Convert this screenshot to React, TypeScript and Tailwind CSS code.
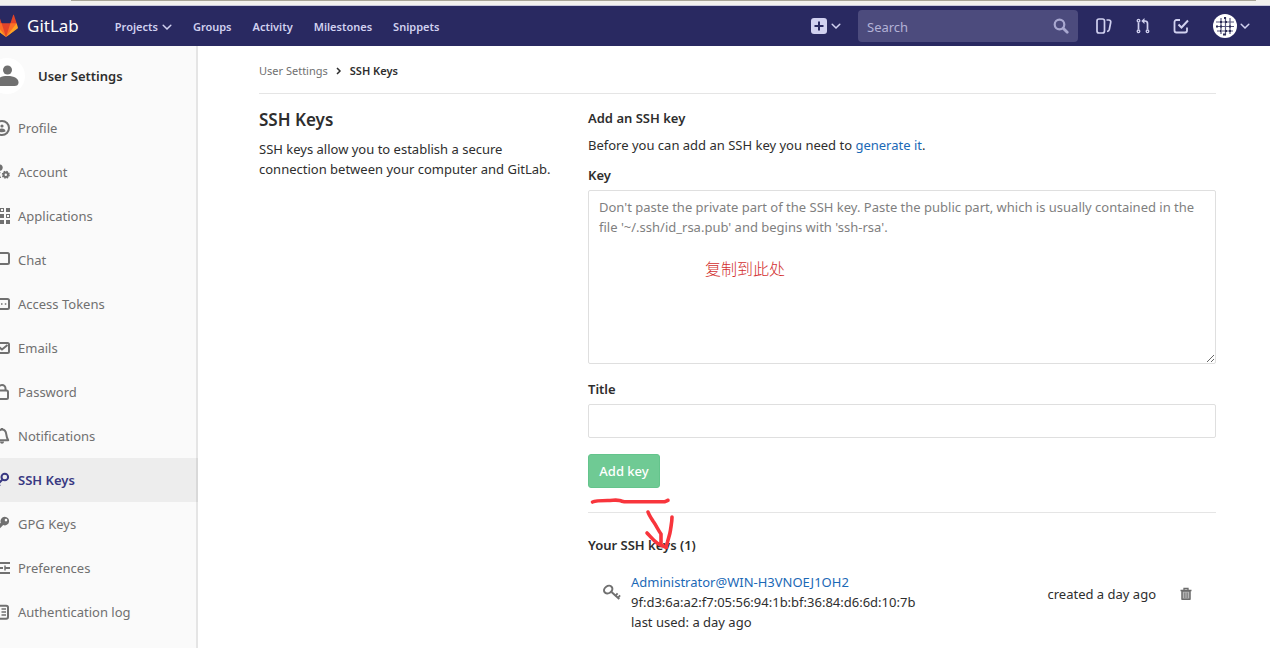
import type { ReactNode } from "react";

function Icon({ children, className = "size-4" }: { children: ReactNode; className?: string }) {
    return (
        <svg className={`${className} shrink-0`} viewBox="0 0 16 16" fill="none" stroke="currentColor" strokeWidth="2" aria-hidden="true">
            {children}
        </svg>
    );
}

function Chevron() {
    return (
        <svg className="w-2.5 h-2.5 shrink-0" viewBox="0 0 10 10" fill="none" stroke="currentColor" strokeWidth="1.5" strokeLinecap="round" aria-hidden="true">
            <path d="M1.2 3.2 5 7l3.8-3.8" />
        </svg>
    );
}

const menu = [
    {
        label: "Profile",
        icon: <><circle cx="8" cy="8" r="7" /><circle cx="8" cy="6" r="1.6" fill="currentColor" stroke="none" /><path d="M4.5 11.5c0-2 1.5-3 3.5-3s3.5 1 3.5 3c-2 1-5 1-7 0z" fill="currentColor" stroke="none" /></>,
    },
    {
        label: "Account",
        icon: <><circle cx="5.5" cy="3.6" r="3.2" fill="currentColor" stroke="none" /><path d="M0 13c0-3 2-5 5-5h1.600c-.9 2-.9 4 .6 6H1z" fill="currentColor" stroke="none" /><circle cx="11.8" cy="10.8" r="2.2" /><circle cx="11.8" cy="10.8" r="3.3" strokeWidth="1.5" strokeDasharray="1.5 1.1" /></>,
    },
    {
        label: "Applications",
        icon: <g fill="currentColor" stroke="none"><path d="M0 0h4v4H0zM12 0h4v4h-4zM6 6h4v4H6zM0 12h4v4H0zM6 12h4v4H6zM12 12h4v4h-4z" /><path fillRule="evenodd" d="M6 0h4v4H6zm1 1v2h2V1zM0 6h4v4H0zm1 1v2h2V7zM12 6h4v4h-4zm1 1v2h2V7z" /></g>,
    },
    {
        label: "Chat",
        icon: <path d="M2.5 1h11A1.5 1.5 0 0 1 15 2.5v8a1.5 1.5 0 0 1-1.5 1.5H5l-4 3v-12.500A1.5 1.5 0 0 1 2.5 1z" />,
    },
    {
        label: "Access Tokens",
        icon: <><rect x="1" y="3" width="14" height="10" rx="1.5" /><path d="M3.5 8H5M7 8h1.500M10.800 8h1.500" strokeWidth="1.5" /></>,
    },
    {
        label: "Emails",
        icon: <><rect x="1" y="3" width="14" height="10" rx="1.5" /><path d="m2.5 5 5.500 4.500L13.500 5" /></>,
    },
    {
        label: "Password",
        icon: <><rect x="2" y="6.5" width="12" height="8.5" rx="1.5" /><path d="M4.5 6V4.500a3.500 3.500 0 0 1 7 0V6" /></>,
    },
    {
        label: "Notifications",
        icon: <><path d="M8 1.500c-3 0-4 2.200-4.300 4.800C3.500 8.500 3 10 1.800 12.200h12.400C13 10 12.500 8.500 12.300 6.300 12 3.700 11 1.500 8 1.500z" strokeLinejoin="round" /><path d="M6 13.500h4c0 3-4 3-4 0zM7 0h2v2H7z" fill="currentColor" stroke="none" /></>,
    },
    {
        label: "SSH Keys",
        active: true,
        icon: <><circle cx="10.8" cy="5" r="3.3" /><path d="m8.500 7.500-7 7M4 12l2 2" /></>,
    },
    {
        label: "GPG Keys",
        icon: <path fill="currentColor" stroke="none" fillRule="evenodd" d="M10.800.8a4.300 4.300 0 1 1-1.600 8.300L3 15.200H1v-2.500l5.800-6A4.300 4.300 0 0 1 10.800.8zm1.200 2a1.300 1.300 0 1 0 0 2.600 1.300 1.300 0 0 0 0-2.600z" />,
    },
    {
        label: "Preferences",
        icon: <><path d="M0 3h16M0 13h16M0 8h9M11 8h5" /><path d="M11 5.500v5M5 1v4" strokeWidth="1.5" /></>,
    },
    {
        label: "Authentication log",
        icon: <><rect x="2" y="1.8" width="12" height="13" rx="1.8" /><path d="M4.500 5h1M4.500 8h1M4.500 11h1M7.500 5H12M7.500 8H12M7.500 11H12" strokeWidth="1.6" /></>,
    },
];

function Logo() {
    return (
        <svg className="size-6 shrink-0" viewBox="0 0 36 36" aria-hidden="true">
            <path fill="#e24329" d="M2 14l9.380 9v-9l-4-12.280c-.205-.632-1.176-.632-1.380 0z" />
            <path fill="#e24329" d="M34 14l-9.380 9v-9l4-12.280c.205-.632 1.176-.632 1.380 0z" />
            <path fill="#e24329" d="M18 34.380 3 14h30z" />
            <path fill="#fc6d26" d="M18 34.380 11.380 14H2l4 11z" />
            <path fill="#fc6d26" d="M18 34.380 24.620 14H34l-4 11z" />
            <path fill="#fca326" d="M2 14L.1 20.160c-.18.565 0 1.200.5 1.560l17.420 12.660z" />
            <path fill="#fca326" d="M34 14l1.900 6.160c.18.565 0 1.200-.5 1.560L18 34.380z" />
        </svg>
    );
}

function Header() {
    return (
        <header className="flex h-10 items-center bg-[#292961] pl-4 pr-5 text-[#d1d1f0]">
            <a href="#" className="flex items-center gap-[9px] text-[17px] text-white">
                <Logo />
                GitLab
            </a>
            <nav className="ml-9 flex items-center gap-[21px] pt-0.5 text-[11px] font-semibold">
                <button type="button" className="flex items-center gap-1">Projects <Chevron /></button>
                <a href="#">Groups</a>
                <a href="#">Activity</a>
                <a href="#">Milestones</a>
                <a href="#">Snippets</a>
            </nav>
            <div className="ml-auto flex items-center">
                <button type="button" aria-label="New" className="mr-[17px] flex items-center gap-1">
                    <svg className="size-4" viewBox="0 0 16 16" aria-hidden="true">
                        <rect width="16" height="16" rx="3" fill="currentColor" />
                        <path d="M8 3.500v9M3.500 8h9" stroke="#292961" strokeWidth="2" />
                    </svg>
                    <Chevron />
                </button>
                <form className="flex h-8 w-[220px] items-center rounded-sm bg-[#4c4b7d] px-[9px]">
                    <input type="search" aria-label="Search" placeholder="Search" className="min-w-0 flex-1 bg-transparent pt-0.5 text-[13px] outline-none placeholder:text-[#b3b2d6]" />
                    <svg className="size-4 text-[#a9a8d0]" viewBox="0 0 16 16" fill="none" stroke="currentColor" aria-hidden="true">
                        <circle cx="6.500" cy="6.500" r="4.800" strokeWidth="2.200" />
                        <path d="m10.200 10.200 4 4" strokeWidth="2.800" strokeLinecap="round" />
                    </svg>
                </form>
                <a href="#" aria-label="Issues" className="ml-[18px]">
                    <Icon>
                        <rect x="1" y="1" width="7.500" height="14" rx="2" strokeWidth="1.700" />
                        <path d="M10.500 2h2.200c1.600 0 2.300 1 2 2.500l-1.400 7c-.3 1.200-1 1.800-2.300 2" strokeWidth="1.700" />
                    </Icon>
                </a>
                <a href="#" aria-label="Merge requests" className="ml-[23px]">
                    <Icon>
                        <g strokeWidth="1.300">
                            <circle cx="3.500" cy="2.700" r="1.300" />
                            <circle cx="3.500" cy="13.300" r="1.300" />
                            <circle cx="12.500" cy="13.300" r="1.300" />
                            <path d="M3.500 4.500v7M12.500 11.500V5.500c0-1.500-1-2.500-2.500-2.500H8" strokeWidth="1.700" />
                        </g>
                        <path d="M9.500 0v6L6.300 3z" fill="currentColor" stroke="none" />
                    </Icon>
                </a>
                <a href="#" aria-label="Todos" className="ml-[22px]">
                    <Icon>
                        <path d="M7 2H3.500A2 2 0 0 0 1.500 4v8.500a2 2 0 0 0 2 2H12a2 2 0 0 0 2-2V9.500" strokeWidth="1.800" />
                        <path d="m5.500 6.500 3 3 6.500-7" strokeWidth="2" />
                    </Icon>
                </a>
                <button type="button" aria-label="User menu" className="ml-6 flex items-center gap-[3px]">
                    <svg className="size-6" viewBox="0 0 24 24" aria-hidden="true">
                        <circle cx="12" cy="12" r="12" fill="#fff" />
                        <path d="M8 4v16M12.500 3v18M17 4v16M3 8h18M3 12.500h18M4 17h16" stroke="#55557c" strokeWidth="1.200" />
                        <path d="M7 8h2M12 8h2M16 12.500h2M7 12.500h2M12 17h2M16 17h2M7 17h1M11 4h2M10 20.500h3M3 12.500h2" stroke="#2c2c55" strokeWidth="2" />
                    </svg>
                    <Chevron />
                </button>
            </div>
        </header>
    );
}

function Sidebar() {
    return (
        <aside className="w-[220px] shrink-0 bg-[#fafafa] shadow-[inset_-2px_0_0_#e5e5e5]">
            <a href="#" className="flex h-[60px] items-center gap-[13px] pl-[11px] font-semibold text-[#2e2e2e]">
                <span className="flex size-9 items-center justify-center rounded-full bg-white text-[#707070]">
                    <svg className="size-6" viewBox="0 0 24 24" fill="currentColor" aria-hidden="true">
                        <circle cx="12.500" cy="6" r="4.500" />
                        <path d="M1.500 18.500c0-4 4-6.500 11-6.500s11 2.500 11 6.500c0 2.500-1.500 3.500-4 3.500h-14c-2.500 0-4-1-4-3.500z" />
                    </svg>
                </span>
                User Settings
            </a>
            <nav>
                {menu.map((item) => (
                    <a
                        key={item.label}
                        href="#"
                        className={
                            item.active
                                ? "flex h-11 items-center gap-2 bg-black/5 px-4 font-semibold text-[#393982]"
                                : "flex h-11 items-center gap-2 px-4 text-[#707070]"
                        }
                    >
                        <Icon>{item.icon}</Icon>
                        {item.label}
                    </a>
                ))}
            </nav>
        </aside>
    );
}

export default function App() {
    return (
        <div className="flex min-h-screen flex-col overflow-x-hidden bg-white font-['Noto_Sans','Noto_Sans_CJK_SC',sans-serif] text-[13px] leading-5 text-[#2e2e2e]">
            {/* browser edge */}
            <div className="h-1.5 border-b border-[#c9c9dd] bg-[#f2f1ef] pl-[71px] pr-3.5">
                <div className="h-px bg-[#a8a598]"></div>
            </div>

            {/* page is scrolled a little to the right */}
            <div className="-ml-[22px] flex flex-1 flex-col">
                <Header />
                <div className="flex flex-1">
                    <Sidebar />

                    <main className="min-w-0 flex-1 pl-[61px] pr-[54px]">
                        <nav className="flex items-center gap-2 border-b border-[#e5e5e5] pt-[15px] pb-3 text-[11px]">
                            <a href="#" className="text-[#707070]">User Settings</a>
                            <svg className="h-2 w-1.5" viewBox="0 0 6 8" fill="none" stroke="currentColor" strokeWidth="1.500" aria-hidden="true">
                                <path d="m1 1 3 3-3 3" />
                            </svg>
                            <a href="#" className="font-semibold">SSH Keys</a>
                        </nav>

                        <div className="grid grid-cols-3 gap-x-[30px] pt-3.5">
                            <div>
                                <h4 className="mb-[7px] text-[17px] leading-6 font-semibold">SSH Keys</h4>
                                <p>SSH keys allow you to establish a secure connection between your computer and GitLab.</p>
                            </div>

                            <div className="col-span-2">
                                <h5 className="font-semibold">Add an SSH key</h5>
                                <p className="mt-[7px]">
                                    Before you can add an SSH key you need to <a href="#" className="text-[#1b69b6]">generate it</a>.
                                </p>

                                <form>
                                    {/* KEY */}
                                    <label htmlFor="key" className="mt-2.5 block font-semibold">Key</label>
                                    <div className="relative mt-[5px]">
                                        <textarea
                                            id="key"
                                            className="block h-[174px] w-full rounded-xs border border-[#dfdfdf] px-2.5 py-1.5 outline-none placeholder:text-[#7f7f7f]"
                                            placeholder="Don't paste the private part of the SSH key. Paste the public part, which is usually contained in the file '~/.ssh/id_rsa.pub' and begins with 'ssh-rsa'."
                                        />
                                        <span className="pointer-events-none absolute left-[117px] top-[68px] font-['Noto_Sans_CJK_SC',sans-serif] text-base leading-5 font-light text-[#d22f2f]">复制到此处</span>
                                    </div>

                                    {/* TITLE */}
                                    <label htmlFor="title" className="mt-[15px] block font-semibold">Title</label>
                                    <input id="title" type="text" className="mt-[5px] block h-[34px] w-full rounded-xs border border-[#dfdfdf] px-2.5 outline-none" />

                                    <div className="relative mt-4 w-fit">
                                        <button type="submit" className="h-[34px] w-[72px] rounded-[3px] border border-[#64c48c] bg-[#6fca94] font-medium text-white">Add key</button>
                                        <svg className="pointer-events-none absolute left-0 top-10 h-[60px] w-[96px]" viewBox="0 0 96 60" fill="none" stroke="#f8353c" strokeWidth="3.600" strokeLinecap="round" strokeLinejoin="round" aria-hidden="true">
                                            <path d="M4.500 8c3-1.500 9-1.500 15-1.500s8-1 12 0 3 1.300 8 1.300h35c3 0 4-1 5.500-1.500" />
                                            <path d="M60 18c1 3 3 6 5 9 3 4 5 9 8 13v9" />
                                            <path d="M59 39c3 3 6 7 10 10 3 2 6 3 9.500 4.500" />
                                            <path d="M84 23c0 5-1 9-1.500 13s-2 8-3 12l-1.500 5" />
                                        </svg>
                                    </div>
                                </form>

                                <hr className="mt-6 border-[#e5e5e5]" />
                                <h5 className="mt-[22px] font-semibold">Your SSH keys (1)</h5>

                                <ul className="mt-[17px]">
                                    <li className="flex items-start pl-[15px] pr-6">
                                        <svg className="mt-3 size-[18px] shrink-0 text-[#707070]" viewBox="0 0 18 18" fill="none" stroke="currentColor" aria-hidden="true">
                                            <ellipse cx="5.200" cy="5.600" rx="4.400" ry="3.500" transform="rotate(-35 5.200 5.600)" strokeWidth="2" />
                                            <path d="m8.500 8 7.800 7" strokeWidth="2" />
                                            <path d="m12.300 12 2.300-2.600M14.800 14l2.300-2.600" strokeWidth="1.800" />
                                        </svg>
                                        <div className="ml-2.5 flex-1">
                                            <a href="#" className="block text-[#1b69b6]">Administrator@WIN-H3VNOEJ1OH2</a>
                                            <span className="block">9f:d3:6a:a2:f7:05:56:94:1b:bf:36:84:d6:6d:10:7b</span>
                                            <span className="block">last used: a day ago</span>
                                        </div>
                                        <div className="mt-3 flex items-center gap-6">
                                            <span>created a day ago</span>
                                            <button type="button" aria-label="Remove" className="text-[#6b6b6b]">
                                                <svg className="h-3.5 w-3" viewBox="0 0 12 14" fill="none" stroke="currentColor" aria-hidden="true">
                                                    <path d="M.5 3.500h11M4 3V1.500h4V3" strokeWidth="1.300" />
                                                    <path d="M2 4h8v8.300H2z" fill="#b5b5b5" strokeWidth="1.500" strokeLinejoin="round" />
                                                    <path d="M4.500 5.500v5.500M6 5.500v5.500M7.500 5.500v5.500" strokeWidth=".6" />
                                                </svg>
                                            </button>
                                        </div>
                                    </li>
                                </ul>
                            </div>
                        </div>
                    </main>
                </div>
            </div>
        </div>
    );
}
